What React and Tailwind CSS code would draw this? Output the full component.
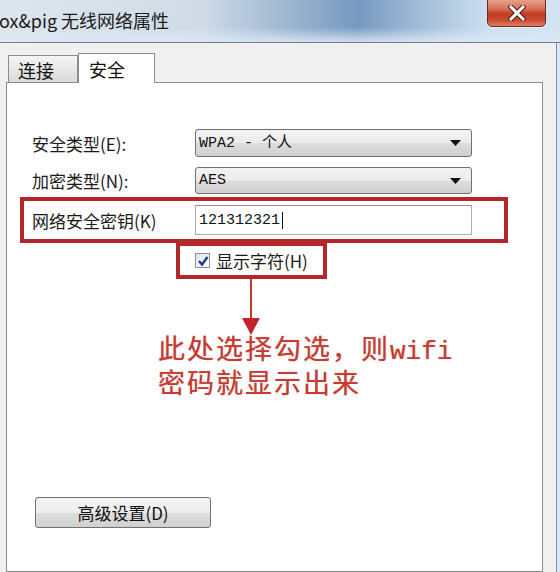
import React from 'react';

const cjk = "font-['Noto_Sans_CJK_SC',sans-serif]";
const mono = "font-['Liberation_Mono','Noto_Sans_CJK_SC',monospace]";

const CloseButton = () => (
  <div className="w-[59px] h-[29px] -mt-[2px] mr-[14px] rounded-b-[5px] border border-[#6b2a22] bg-[linear-gradient(to_bottom,#e9a48f_0%,#d8745c_35%,#c13a22_55%,#cc4f33_80%,#de8066_100%)] flex items-center justify-center shadow-[0_1px_0_rgba(255,255,255,0.6)]">
    <svg width="18" height="16" viewBox="0 0 18 16">
      <path d="M3 2 L15 14 M15 2 L3 14" stroke="#4a1a14" strokeWidth="5" strokeLinecap="square" />
      <path d="M3 2 L15 14 M15 2 L3 14" stroke="#ffffff" strokeWidth="3" strokeLinecap="square" />
    </svg>
  </div>
);

const TitleBar = () => (
  <div className="h-[42px] flex items-start bg-[linear-gradient(to_bottom,rgba(255,255,255,0)_65%,rgba(220,234,246,0.85)_100%),linear-gradient(to_right,#dde6ee_0%,#d0dbe7_36%,#8eabca_56%,#7799c1_64%,#a5bfda_76%,#cddff0_87%,#d3e3f2_100%)]">
    <div className={`${cjk} text-[18px] leading-[20px] pt-[10px] text-[#1b1b1b] whitespace-nowrap -ml-[1px]`}>
      ox&amp;pig 无线网络属性
    </div>
    <div className="flex-1" />
    <CloseButton />
  </div>
);

const DropArrow = () => (
  <svg width="11" height="6" viewBox="0 0 11 6">
    <path d="M0 0 H11 L5.5 6 Z" fill="#111111" />
  </svg>
);

const Select = ({ value, h }) => (
  <div
    className={`w-[277px] ${h} rounded-[3px] border border-[#707070] bg-[linear-gradient(to_bottom,#f3f3f3_0%,#ebebeb_50%,#dddddd_51%,#cfcfcf_100%)] flex items-center pl-[3px] pr-[10px]`}
  >
    <span className={`${mono} text-[15px] leading-none text-[#111] flex-1`}>{value}</span>
    <DropArrow />
  </div>
);

const Label = ({ children }) => (
  <div className={`${cjk} w-[163px] text-[17px] leading-none text-[#1a1a1a]`}>{children}</div>
);

const Checkbox = () => (
  <div className="w-[15px] h-[15px] border border-[#8e8f8f] bg-[linear-gradient(to_bottom_right,#dfe6ee,#ffffff)] flex items-center justify-center">
    <svg width="12" height="12" viewBox="0 0 12 12">
      <path d="M2 6 L5 9.5 L10.5 2" stroke="#1f3f7e" strokeWidth="2.4" fill="none" />
    </svg>
  </div>
);

export default function App() {
  return (
    <div className="w-[560px] h-[572px] overflow-hidden flex flex-col bg-[#dbe7f3]">
      <TitleBar />
      <div className="h-px bg-[#6f7f8f]" />
      <div className="flex flex-1 min-h-0">
        <div className="w-[556px] bg-[#f0f0f0] flex flex-col">
          {/* tabs */}
          <div className="flex items-end pl-[8px] pt-[10px]">
            <div
              className={`${cjk} w-[70px] h-[27px] border border-b-0 border-[#898c95] bg-[linear-gradient(to_bottom,#f4f4f4,#dadada)] pl-[9px] text-[18px] leading-[28px] text-[#111]`}
            >
              连接
            </div>
            <div
              className={`${cjk} relative z-10 w-[77px] h-[30px] -mb-px border border-b-0 border-[#898c95] bg-white pl-[10px] text-[18px] leading-[30px] text-[#111]`}
            >
              安全
            </div>
          </div>

          {/* panel */}
          <div className="ml-[6px] w-[537px] flex-1 border border-[#898c95] bg-white flex flex-col pt-[46px]">
            <div className="flex items-center pl-[25px]">
              <Label>安全类型(E):</Label>
              <Select value="WPA2 - 个人" h="h-[28px]" />
            </div>
            <div className="flex items-center pl-[25px] mt-[10px]">
              <Label>加密类型(N):</Label>
              <Select value="AES" h="h-[27px]" />
            </div>

            <div className="mt-[3px] ml-[13px] w-[488px] border-4 border-[#b3282d] flex items-center pl-[8px] py-[4px]">
              <Label>网络安全密钥(K)</Label>
              <div className="w-[277px] h-[30px] border border-[#abadb3] border-t-[#8e9096] bg-white flex items-center pl-[3px]">
                <span className={`${mono} text-[15px] leading-none text-[#111]`}>121312321</span>
                <span className="w-px h-[17px] bg-[#111] ml-[2px]" />
              </div>
            </div>

            <div className="-mt-px ml-[169px] w-[151px] h-[37px] border-4 border-[#b3282d] flex items-center pl-[15px] gap-[6px]">
              <Checkbox />
              <span className={`${cjk} text-[17px] leading-none text-[#1a1a1a]`}>显示字符(H)</span>
            </div>

            {/* arrow */}
            <div className="ml-[235px] w-[18px] flex flex-col items-center">
              <div className="w-[2px] h-[40px] bg-[#c3392e]" />
              <svg width="18" height="17" viewBox="0 0 18 17" className="-mt-[1px]">
                <path d="M0 0 H18 L9 17 Z" fill="#c3242a" />
              </svg>
            </div>

            <p
              className={`${cjk} -mt-[2px] ml-[151px] whitespace-nowrap text-[27px] leading-[29px] tracking-[2px] text-[#c93a31] [text-shadow:0_0_1px_rgba(120,20,20,0.5)]`}
            >
              此处选择勾选，则<span className="font-['Liberation_Mono',monospace] text-[26px] tracking-[0px]">wifi</span>
              <br />
              密码就显示出来
            </p>

            <div
              className={`${cjk} mt-[101px] ml-[28px] w-[176px] h-[31px] rounded-[3px] border border-[#707070] bg-[linear-gradient(to_bottom,#f4f4f4_0%,#ececec_50%,#dedede_51%,#d0d0d0_100%)] flex items-center justify-center text-[17px] text-[#111]`}
            >
              高级设置(D)
            </div>
          </div>
        </div>
        <div className="w-px bg-[#7c95ae]" />
      </div>
    </div>
  );
}
